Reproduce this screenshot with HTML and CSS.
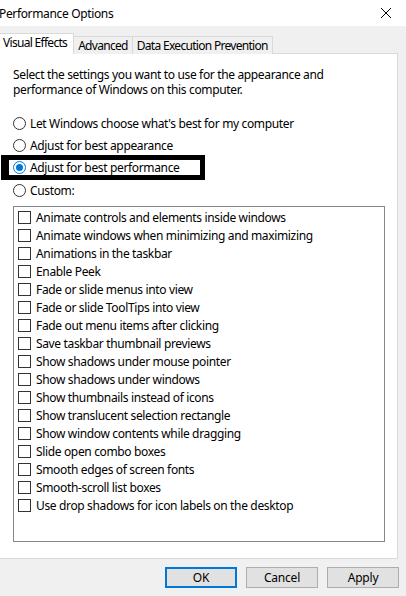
FILE: index.html
```html
<!DOCTYPE html>
<html lang="en">
<head>
    <meta charset="UTF-8">
    <title>Performance Options</title>
    <link rel="stylesheet" href="styles.css">
</head>
<body>
    <!-- title bar -->
    <div class="titlebar">
        <span class="title">Performance Options</span>
        <svg class="close" width="12" height="12" viewBox="0 0 12 12">
            <path d="M1 1 L11 11 M11 1 L1 11" stroke="#000" stroke-width="1" fill="none"/>
        </svg>
    </div>

    <div class="tabs">
        <div class="tab active">Visual Effects</div>
        <div class="tab">Advanced</div>
        <div class="tab">Data Execution Prevention</div>
    </div>

    <div class="panel">
        <p class="intro">Select the settings you want to use for the appearance and performance of Windows on this computer.</p>

        <div class="options">
            <label class="radio"><span class="dot"></span>Let Windows choose what's best for my computer</label>
            <label class="radio"><span class="dot"></span>Adjust for best appearance</label>
            <label class="radio marked"><span class="dot on"></span>Adjust for best performance</label>
            <label class="radio"><span class="dot"></span>Custom:</label>
        </div>

        <div class="listbox">
            <div class="item"><span class="box"></span>Animate controls and elements inside windows</div>
            <div class="item"><span class="box"></span>Animate windows when minimizing and maximizing</div>
            <div class="item"><span class="box"></span>Animations in the taskbar</div>
            <div class="item"><span class="box"></span>Enable Peek</div>
            <div class="item"><span class="box"></span>Fade or slide menus into view</div>
            <div class="item"><span class="box"></span>Fade or slide ToolTips into view</div>
            <div class="item"><span class="box"></span>Fade out menu items after clicking</div>
            <div class="item"><span class="box"></span>Save taskbar thumbnail previews</div>
            <div class="item"><span class="box"></span>Show shadows under mouse pointer</div>
            <div class="item"><span class="box"></span>Show shadows under windows</div>
            <div class="item"><span class="box"></span>Show thumbnails instead of icons</div>
            <div class="item"><span class="box"></span>Show translucent selection rectangle</div>
            <div class="item"><span class="box"></span>Show window contents while dragging</div>
            <div class="item"><span class="box"></span>Slide open combo boxes</div>
            <div class="item"><span class="box"></span>Smooth edges of screen fonts</div>
            <div class="item"><span class="box"></span>Smooth-scroll list boxes</div>
            <div class="item"><span class="box"></span>Use drop shadows for icon labels on the desktop</div>
        </div>
    </div>

    <div class="buttons">
        <button class="default">OK</button>
        <button>Cancel</button>
        <button>Apply</button>
    </div>
</body>
</html>
```

FILE: styles.css
```css
body {
    margin: 0;
    background-color: #f0f0f0;
    font-family: "Noto Sans", "Open Sans", sans-serif;
    font-size: 12px;
    letter-spacing: -0.35px;
    color: #000;
    overflow: hidden;
}

.titlebar {
    height: 26px;
    background-color: white;
    display: flex;
    align-items: center;
    justify-content: space-between;
    padding-right: 14px;
}

.title {
    margin-left: -1px;
}

.close {
    display: block;
}

.tabs {
    display: flex;
    align-items: flex-end;
    margin-top: 8px;
    height: 20px;
    position: relative;
    z-index: 1;
    letter-spacing: -0.7px;
}

.tab {
    height: 17px;
    line-height: 17px;
    padding: 0 4px;
    border: 1px solid #d9d9d9;
    border-bottom: none;
    background-color: #f0f0f0;
    margin-left: -1px;
}

.tab.active {
    height: 20px;
    line-height: 18px;
    background-color: white;
    padding: 0 6px 0 3px;
}

.panel {
    background-color: white;
    border: 1px solid #d9d9d9;
    margin-left: -1px;
    width: 399px;
    height: 506px;
    margin-top: -1px;
    padding: 0 12px 0 13px;
    box-sizing: border-box;
}

.intro {
    margin: 13px 0 0 0;
    line-height: 15px;
    width: 320px;
}

.options {
    display: flex;
    flex-direction: column;
    margin-top: 15px;
}

.radio {
    display: flex;
    align-items: center;
    height: 22px;
}

.dot {
    width: 11px;
    height: 11px;
    border: 1px solid #333;
    border-radius: 50%;
    margin-right: 4px;
    display: flex;
    align-items: center;
    justify-content: center;
}

.dot.on {
    border-color: #0078d7;
}

.dot.on::after {
    content: "";
    width: 7px;
    height: 7px;
    border-radius: 50%;
    background-color: #0078d7;
}

.radio.marked {
    border: 5px solid black;
    border-left-width: 8px;
    margin: -1px 0 -1px -12px;
    padding-left: 4px;
    width: 187px;
    height: 15px;
    background-color: white;
}

.listbox {
    margin-top: 5px;
    height: 336px;
    border: 1px solid #828790;
    padding: 1px 0 0 4px;
    box-sizing: border-box;
}

.item {
    display: flex;
    align-items: center;
    height: 18px;
}

.box {
    width: 11px;
    height: 11px;
    border: 1px solid #333;
    margin-right: 5px;
    background-color: white;
}

.buttons {
    display: flex;
    justify-content: flex-end;
    gap: 9px;
    padding: 8px 7px 0 0;
}

button {
    width: 72px;
    height: 21px;
    font-family: inherit;
    font-size: 12px;
    letter-spacing: -0.2px;
    background-color: #e1e1e1;
    border: 1px solid #adadad;
    padding: 0;
    color: #000;
}

button.default {
    border: 2px solid #0078d7;
}
```
